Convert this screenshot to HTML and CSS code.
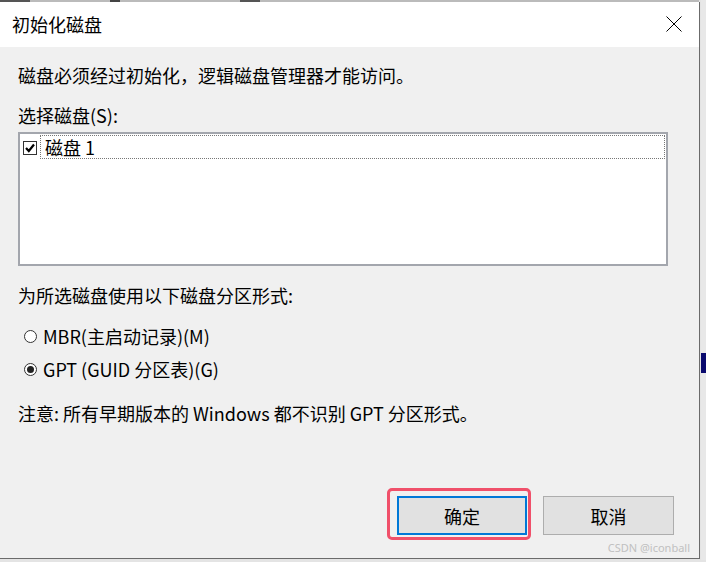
FILE: index.html
```html
<!DOCTYPE html>
<html lang="zh-CN">
<head>
<meta charset="utf-8">
<title>初始化磁盘</title>
<link rel="stylesheet" href="styles.css">
</head>
<body>
<div class="screen">
  <div class="topstrip"></div>
  <div class="dialog">
    <div class="titlebar">
      <span class="title">初始化磁盘</span>
      <span class="close" aria-label="关闭">
        <svg width="16" height="16" viewBox="0 0 16 16"><path d="M0.5 0.5 L15.5 15.5 M15.5 0.5 L0.5 15.5" stroke="#000" stroke-width="1" fill="none"/></svg>
      </span>
    </div>
    <div class="content">
      <p class="line intro">磁盘必须经过初始化，逻辑磁盘管理器才能访问。</p>
      <p class="line select-label">选择磁盘(S):</p>
      <div class="listbox">
        <div class="item">
          <span class="checkbox">
            <svg width="14" height="14" viewBox="0 0 14 14"><rect x="0.5" y="0.5" width="13" height="13" fill="#fff" stroke="#333"/><path d="M3 7 L5.8 10 L11 3.5" stroke="#000" stroke-width="2.2" fill="none"/></svg>
          </span>
          <span class="item-label">磁盘 1</span>
        </div>
      </div>
      <p class="line part-label">为所选磁盘使用以下磁盘分区形式:</p>
      <div class="radios">
        <label class="radio"><span class="dot"></span>MBR(主启动记录)(M)</label>
        <label class="radio checked"><span class="dot"></span>GPT (GUID 分区表)(G)</label>
      </div>
      <p class="line note">注意: 所有早期版本的 Windows 都不识别 GPT 分区形式。</p>
      <div class="buttons">
        <div class="btn-wrap">
          <button class="btn primary">确定</button>
          <span class="highlight"></span>
        </div>
        <button class="btn">取消</button>
      </div>
    </div>
  </div>
  <div class="rightstrip">
    <span class="rs-band"></span>
  </div>
  <span class="watermark">CSDN @iconball</span>
</div>
</body>
</html>
```

FILE: styles.css
```css
* { box-sizing: border-box; }
html, body { margin: 0; padding: 0; }
body {
  width: 706px;
  height: 562px;
  overflow: hidden;
  background: #e4e4e4;
  font-family: "Noto Sans CJK SC", "Noto Sans", sans-serif;
  color: #000;
}
.screen {
  position: relative;
  width: 706px;
  height: 562px;
}
.topstrip {
  height: 2px;
  width: 699px;
  background: linear-gradient(to right, #555 0 30px, #bbb 30px 110px, #444 110px 120px, #bbb 120px 240px, #555 240px 260px, #bbb 260px 700px);
}
.dialog {
  width: 700px;
  height: 557px;
  border-right: 1px solid #6b6b6b;
  border-bottom: 1px solid #6b6b6b;
  background: #f0f0f0;
  display: flex;
  flex-direction: column;
}
.titlebar {
  height: 45px;
  background: #fff;
  display: flex;
  align-items: center;
  justify-content: space-between;
  padding: 0 17px 0 12px;
}
.title {
  font-size: 18px;
  line-height: 24px;
  padding-bottom: 1px;
}
.close {
  display: flex;
  width: 16px;
  height: 16px;
  margin-bottom: 1px;
}
.content {
  flex: 1;
  display: flex;
  flex-direction: column;
  padding: 16px 25px 23px 18px;
}
.line {
  margin: 0;
  font-size: 18px;
  line-height: 24px;
  white-space: nowrap;
}
.select-label { margin-top: 16px; }
.listbox {
  margin-top: 5px;
  margin-right: 6px;
  height: 134px;
  border: 2px solid #a3a6ad;
  background: #fff;
  padding: 1px 1px 0 3px;
}
.item {
  display: flex;
  align-items: center;
  height: 24px;
}
.checkbox {
  display: flex;
  width: 14px;
  height: 14px;
  margin-top: 1px;
}
.item-label {
  flex: 1;
  margin-left: 3px;
  height: 24px;
  border: 1px dotted #777;
  font-size: 18px;
  line-height: 22px;
  padding-left: 4px;
}
.part-label { margin-top: 17px; }
.radios {
  display: flex;
  flex-direction: column;
  gap: 9px;
  margin-top: 17px;
  padding-left: 6px;
}
.radio {
  display: flex;
  align-items: center;
  font-size: 18px;
  line-height: 24px;
  white-space: nowrap;
}
.dot {
  width: 13px;
  height: 13px;
  border: 1px solid #333;
  border-radius: 50%;
  background: #fff;
  margin-right: 6px;
  display: flex;
  align-items: center;
  justify-content: center;
}
.radio.checked .dot::after {
  content: "";
  width: 7px;
  height: 7px;
  border-radius: 50%;
  background: #222;
}
.note { margin-top: 20px; }
.buttons {
  margin-top: auto;
  display: flex;
  justify-content: flex-end;
  gap: 16px;
}
.btn-wrap {
  position: relative;
  display: flex;
}
.btn {
  width: 131px;
  height: 39px;
  background: #e1e1e1;
  border: 1px solid #adadad;
  font-family: "Noto Sans CJK SC", "Noto Sans", sans-serif;
  font-size: 18px;
  color: #000;
  padding: 0;
}
.btn.primary {
  width: 130px;
  border: 2px solid #0078d7;
}
.highlight {
  position: absolute;
  left: -10px;
  top: -8px;
  right: -4px;
  bottom: -5px;
  border: 3px solid #f0506a;
  border-radius: 5px;
  pointer-events: none;
}
.rightstrip {
  position: absolute;
  left: 701px;
  top: 0;
  width: 5px;
  height: 560px;
  background: #e8e8e8;
}
.rs-band {
  position: absolute;
  left: 0;
  top: 353px;
  width: 5px;
  height: 20px;
  background: #0a0a6e;
}
.watermark {
  position: absolute;
  right: 16px;
  top: 541px;
  font-family: "Noto Sans", sans-serif;
  font-size: 11px;
  line-height: 14px;
  color: #c0c0c0;
}
```
